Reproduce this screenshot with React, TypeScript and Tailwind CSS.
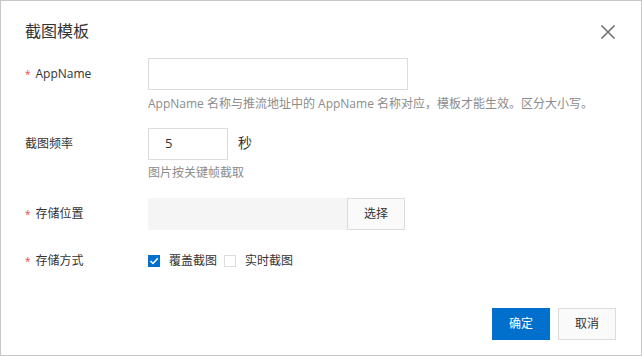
import React from "react";

const font = { fontFamily: '"Open Sans", "Noto Sans CJK SC", sans-serif' };

function Label({ text, required }: { text: string; required?: boolean }) {
  return (
    <div className="w-[123px] shrink-0 h-[32px] flex items-center text-[12px] text-[#333]">
      {required && <span className="text-[#e8474b] text-[10px] mr-[5px] leading-none">*</span>}
      <span>{text}</span>
    </div>
  );
}

export default function App() {
  return (
    <div style={font} className="w-[642px] h-[356px] bg-white border border-[#c6c6c6] flex flex-col">
      <div className="flex items-center justify-between pl-[24px] pr-[25px] pt-[20px] h-[40px]">
        <div className="text-[16px] leading-[20px] text-[#333]">截图模板</div>
        <svg width="16" height="16" viewBox="0 0 16 16" className="mt-[2px]">
          <path d="M1.5 1.5 L14.5 14.5 M14.5 1.5 L1.5 14.5" stroke="#707070" strokeWidth="1.6" fill="none" />
        </svg>
      </div>

      <div className="pl-[24px] mt-[17px]">
        <div className="flex">
          <Label text="AppName" required />
          <div>
            <div className="w-[260px] h-[32px] border border-[#dcdcdc] bg-white" />
            <div className="mt-[5px] text-[12px] leading-[18px] text-[#8c8c8c] whitespace-nowrap">
              AppName 名称与推流地址中的 AppName 名称对应，模板才能生效。区分大小写。
            </div>
          </div>
        </div>

        <div className="flex mt-[15px]">
          <Label text="截图频率" />
          <div>
            <div className="flex items-center">
              <div className="w-[80px] h-[32px] border border-[#dcdcdc] bg-white flex items-center pl-[16px] text-[13px] text-[#333]">
                5
              </div>
              <span className="ml-[10px] text-[14px] text-[#333] -mt-[4px]">秒</span>
            </div>
            <div className="mt-[4px] text-[12px] leading-[18px] text-[#8c8c8c]">图片按关键帧截取</div>
          </div>
        </div>

        <div className="flex mt-[16px]">
          <Label text="存储位置" required />
          <div className="flex">
            <div className="w-[199px] h-[32px] bg-[#f5f5f5]" />
            <div className="w-[58px] h-[32px] border border-[#dcdcdc] bg-[#fafafa] flex items-center justify-center text-[12px] text-[#333]">
              选择
            </div>
          </div>
        </div>

        <div className="flex mt-[15px]">
          <Label text="存储方式" required />
          <div className="flex items-center h-[32px] text-[12px] text-[#333]">
            <div className="w-[12px] h-[12px] bg-[#0070cc] flex items-center justify-center">
              <svg width="10" height="10" viewBox="0 0 10 10">
                <path d="M1.5 5 L4 7.5 L8.8 2.2" stroke="#fff" strokeWidth="1.5" fill="none" />
              </svg>
            </div>
            <span className="ml-[9px]">覆盖截图</span>
            <div className="ml-[7px] w-[12px] h-[12px] border border-[#dcdcdc] bg-white" />
            <span className="ml-[9px]">实时截图</span>
          </div>
        </div>
      </div>

      <div className="mt-auto flex justify-end gap-[8px] pr-[25px] pb-[15px]">
        <div className="w-[58px] h-[32px] bg-[#0070cc] text-white text-[12px] flex items-center justify-center">确定</div>
        <div className="w-[58px] h-[32px] border border-[#dcdcdc] bg-[#fafafa] text-[#333] text-[12px] flex items-center justify-center">取消</div>
      </div>
    </div>
  );
}
